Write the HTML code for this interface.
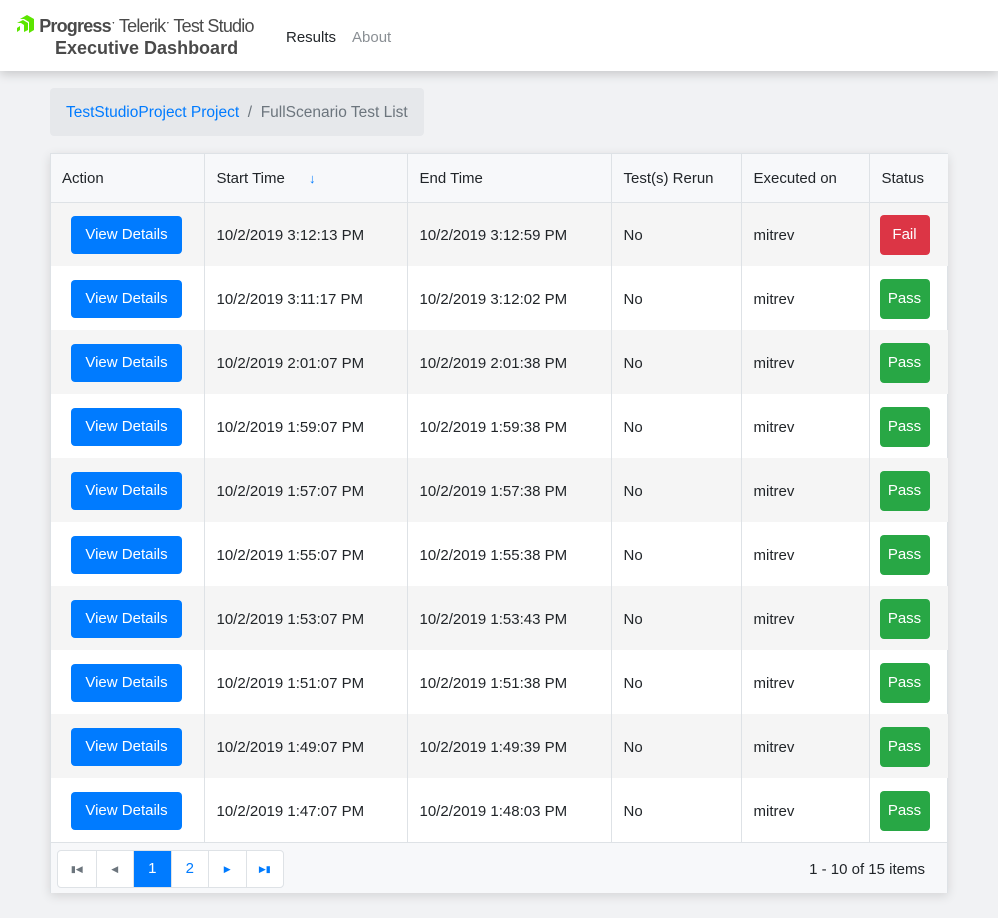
<!DOCTYPE html>
<html><head><style>
*{box-sizing:border-box;margin:0;padding:0}
body{width:998px;height:918px;background:#f1f2f4;font-family:"Liberation Sans",sans-serif;color:#212529;font-size:15px;position:relative;overflow:hidden}
.hdr{position:absolute;left:0;top:0;width:998px;height:71px;background:#fff;box-shadow:0 3px 10px rgba(0,0,0,.18)}
.logo{position:absolute;left:16px;top:15px;font-size:18px;color:#4a4a4a;letter-spacing:-.8px}
.logo b{font-weight:bold}
.sub{position:absolute;left:55px;top:38px;font-size:18px;font-weight:bold;color:#4a4a4a}
.nav{position:absolute;top:29px;font-size:15px}
.bc{position:absolute;left:50px;top:88px;width:374px;height:48px;background:#e6e8eb;border-radius:4px;padding:16px 16px;font-size:15.5px;color:#6c757d}
.bc a{color:#007bff}
.tbl{position:absolute;left:50px;top:153px;width:898px;height:740px;background:#fff;border:1px solid #dee2e6;box-shadow:0 3px 10px rgba(0,0,0,.12)}
table{border-collapse:collapse;width:897px;table-layout:fixed}
td,th{font-weight:normal;text-align:left;padding:2px 12px 0;border-left:1px solid #dee2e6;height:64px}
th{height:48px;background:#f7f8fa;border-bottom:1px solid #dee2e6}
td:first-child{border-left:none;padding-left:20px}
th:first-child{border-left:none;padding-left:11px}
tr:nth-child(even) td{background:#f5f5f5}
.btn{display:inline-block;background:#007bff;color:#fff;width:111px;height:38px;line-height:38px;text-align:center;border-radius:4px}
.st{display:inline-block;width:50px;height:40px;line-height:40px;text-align:center;color:#fff;border-radius:4px;background:#28a745}
td:last-child{padding-left:10px}
.fail{background:#dc3545}
.foot{position:absolute;left:0;top:688px;width:896px;height:51px;background:#f7f8fa;border-top:1px solid #dee2e6}
.pg{position:absolute;left:6px;top:7px;display:flex;border:1px solid #dee2e6;border-radius:4px;overflow:hidden;background:#fff}
.pg span{width:37.5px;height:36px;line-height:36px;text-align:center;border-left:1px solid #dee2e6;font-size:15px;color:#007bff}
.pg span:first-child{border-left:none}
.info{position:absolute;right:22px;top:18px}
</style></head><body>
<div class="hdr">
<div class="logo"><svg width="19" height="19" viewBox="0 0 19 19" style="vertical-align:-2px"><path d="M4 4 L11 0 L18 4 L18 15 L13 18 L13 7 L8 4 Z" fill="#5ce500"/><path d="M1 8 L7 5 L12 8 L12 15 L8 17 L8 10 L5 8 Z" fill="#5ce500"/><path d="M1 13 L4 11 L4 15 L1 17Z" fill="#5ce500"/></svg> <b>Progress</b>ˑ Telerikˑ Test Studio</div>
<div class="sub">Executive Dashboard</div>
<div class="nav" style="left:286px">Results</div>
<div class="nav" style="left:352px;color:#8a8f94">About</div>
</div>
<div class="bc"><a>TestStudioProject Project</a> &nbsp;/&nbsp; FullScenario Test List</div>
<div class="tbl">
<table>
<tr><th style="width:153px">Action</th><th style="width:203px">Start Time <span style="color:#007bff;margin-left:20px;font-size:13px">↓</span></th><th style="width:204px">End Time</th><th style="width:130px">Test(s) Rerun</th><th style="width:128px">Executed on</th><th>Status</th></tr>
<tr><td><span class="btn">View Details</span></td><td>10/2/2019 3:12:13 PM</td><td>10/2/2019 3:12:59 PM</td><td>No</td><td>mitrev</td><td><span class="st fail">Fail</span></td></tr>
<tr><td><span class="btn">View Details</span></td><td>10/2/2019 3:11:17 PM</td><td>10/2/2019 3:12:02 PM</td><td>No</td><td>mitrev</td><td><span class="st">Pass</span></td></tr>
<tr><td><span class="btn">View Details</span></td><td>10/2/2019 2:01:07 PM</td><td>10/2/2019 2:01:38 PM</td><td>No</td><td>mitrev</td><td><span class="st">Pass</span></td></tr>
<tr><td><span class="btn">View Details</span></td><td>10/2/2019 1:59:07 PM</td><td>10/2/2019 1:59:38 PM</td><td>No</td><td>mitrev</td><td><span class="st">Pass</span></td></tr>
<tr><td><span class="btn">View Details</span></td><td>10/2/2019 1:57:07 PM</td><td>10/2/2019 1:57:38 PM</td><td>No</td><td>mitrev</td><td><span class="st">Pass</span></td></tr>
<tr><td><span class="btn">View Details</span></td><td>10/2/2019 1:55:07 PM</td><td>10/2/2019 1:55:38 PM</td><td>No</td><td>mitrev</td><td><span class="st">Pass</span></td></tr>
<tr><td><span class="btn">View Details</span></td><td>10/2/2019 1:53:07 PM</td><td>10/2/2019 1:53:43 PM</td><td>No</td><td>mitrev</td><td><span class="st">Pass</span></td></tr>
<tr><td><span class="btn">View Details</span></td><td>10/2/2019 1:51:07 PM</td><td>10/2/2019 1:51:38 PM</td><td>No</td><td>mitrev</td><td><span class="st">Pass</span></td></tr>
<tr><td><span class="btn">View Details</span></td><td>10/2/2019 1:49:07 PM</td><td>10/2/2019 1:49:39 PM</td><td>No</td><td>mitrev</td><td><span class="st">Pass</span></td></tr>
<tr><td><span class="btn">View Details</span></td><td>10/2/2019 1:47:07 PM</td><td>10/2/2019 1:48:03 PM</td><td>No</td><td>mitrev</td><td><span class="st">Pass</span></td></tr>
</table>
<div class="foot">
<div class="pg"><span style="color:#6c757d;font-size:9px">▮◀</span><span style="color:#6c757d;font-size:9px">◀</span><span style="background:#007bff;color:#fff">1</span><span>2</span><span style="font-size:9px">▶</span><span style="font-size:9px">▶▮</span></div>
<div class="info">1 - 10 of 15 items</div>
</div>
</div>
</body></html>
